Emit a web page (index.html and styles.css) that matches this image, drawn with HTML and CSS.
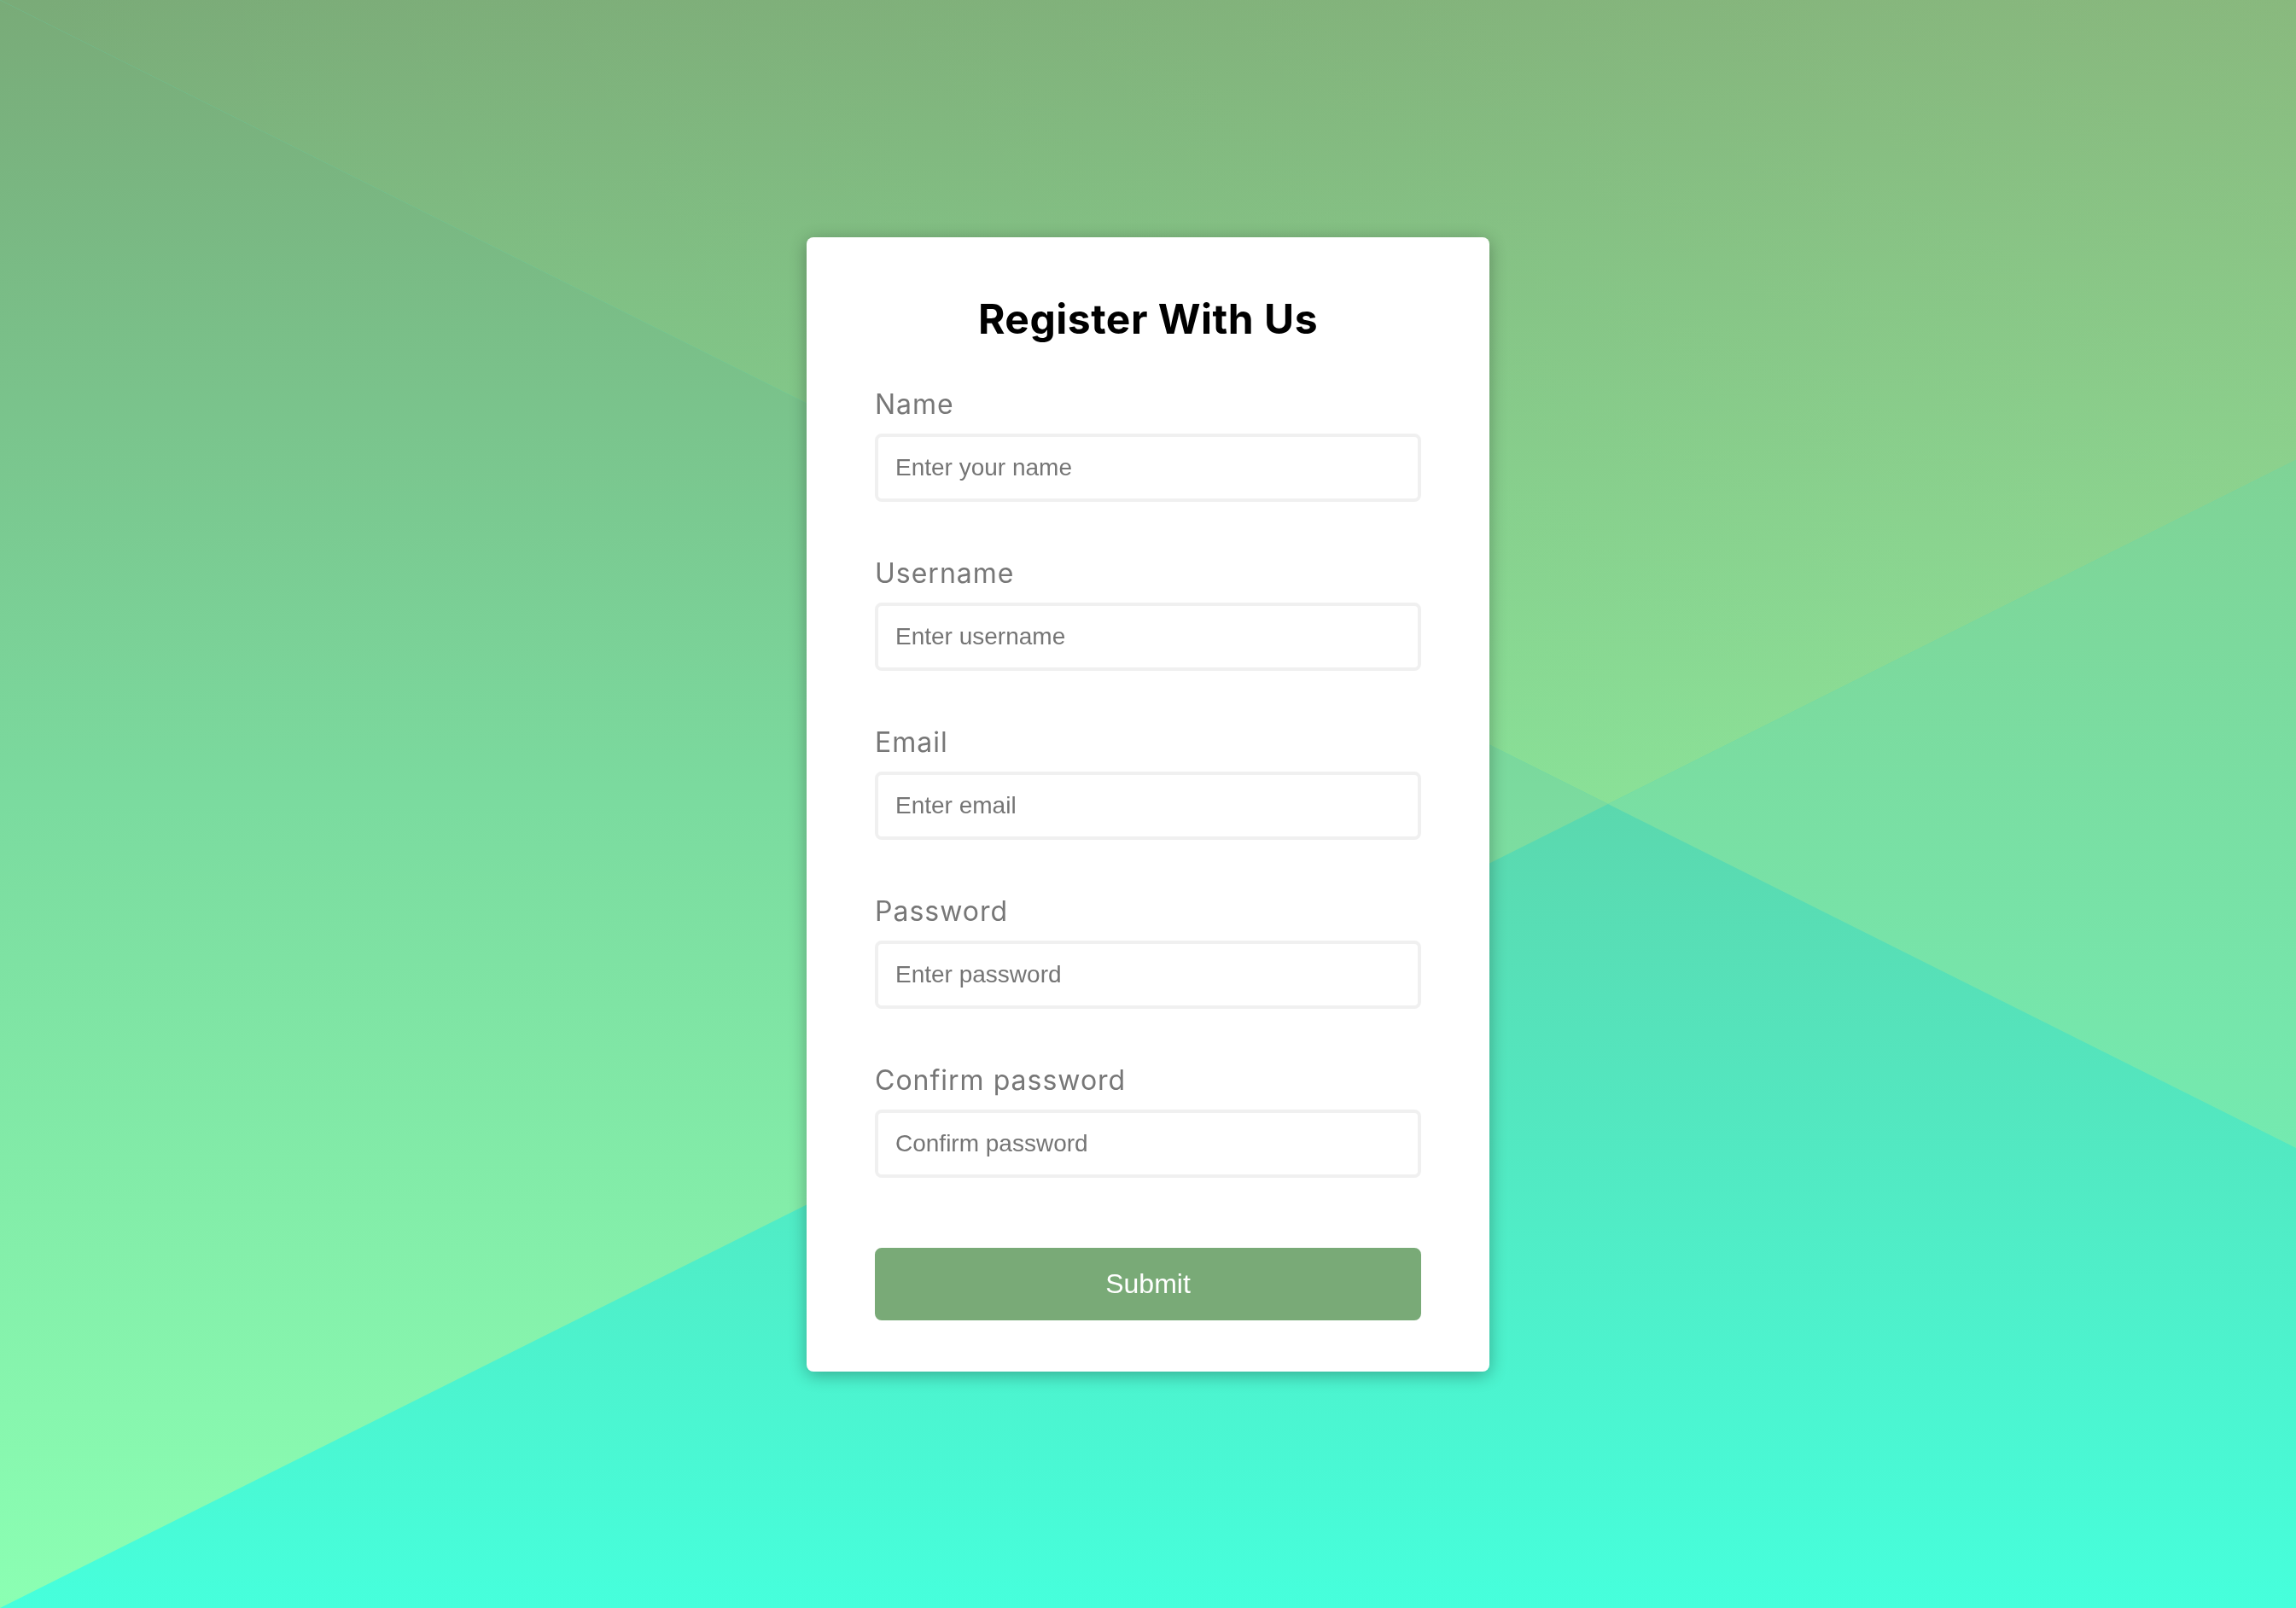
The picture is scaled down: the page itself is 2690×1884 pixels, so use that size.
FILE: index.html
```html
<!DOCTYPE html>
<html lang="en">
<head>
<meta charset="UTF-8">
<title>Register With Us</title>
<link rel="stylesheet" href="styles.css">
</head>
<body>
<svg class="backdrop" viewBox="0 0 2690 1884" preserveAspectRatio="none" aria-hidden="true">
  <defs>
    <linearGradient id="gTop" gradientUnits="userSpaceOnUse" x1="0" y1="0" x2="0" y2="942">
      <stop offset="0" stop-color="#7aab78"/>
      <stop offset="1" stop-color="#80dd97"/>
    </linearGradient>
    <linearGradient id="gTopSheen" gradientUnits="userSpaceOnUse" x1="0" y1="0" x2="2690" y2="0">
      <stop offset="0" stop-color="#d2fd9b" stop-opacity="0"/>
      <stop offset="1" stop-color="#d2fd9b" stop-opacity="0.17"/>
    </linearGradient>
    <linearGradient id="gLeft" gradientUnits="userSpaceOnUse" x1="0" y1="0" x2="0" y2="1884">
      <stop offset="0" stop-color="#79ab78"/>
      <stop offset="0.5" stop-color="#7bdb9f"/>
      <stop offset="1" stop-color="#8bffb3"/>
    </linearGradient>
    <linearGradient id="gRight" gradientUnits="userSpaceOnUse" x1="0" y1="539" x2="0" y2="1345">
      <stop offset="0" stop-color="#7fd396"/>
      <stop offset="1" stop-color="#74eab0"/>
    </linearGradient>
    <linearGradient id="gBottom" gradientUnits="userSpaceOnUse" x1="0" y1="942" x2="0" y2="1884">
      <stop offset="0" stop-color="#5bd8ae"/>
      <stop offset="1" stop-color="#46ffdc"/>
    </linearGradient>
  </defs>
  <rect x="0" y="0" width="2690" height="1884" fill="url(#gBottom)"/>
  <polygon points="0,0 2690,0 2690,539 1884,942" fill="url(#gTop)"/>
  <polygon points="0,0 2690,0 2690,539 1884,942" fill="url(#gTopSheen)"/>
  <polygon points="0,0 1884,942 0,1884" fill="url(#gLeft)"/>
  <polygon points="2690,539 2690,1345 1884,942" fill="url(#gRight)"/>
</svg>

<main class="card">
  <form class="form" action="#" onsubmit="return false;">
    <h2 class="card-title">Register With Us</h2>

    <div class="field">
      <label class="field-label" for="name">Name</label>
      <input class="field-input" type="text" id="name" placeholder="Enter your name">
    </div>

    <div class="field">
      <label class="field-label" for="username">Username</label>
      <input class="field-input" type="text" id="username" placeholder="Enter username">
    </div>

    <div class="field">
      <label class="field-label" for="email">Email</label>
      <input class="field-input" type="text" id="email" placeholder="Enter email">
    </div>

    <div class="field">
      <label class="field-label" for="password">Password</label>
      <input class="field-input" type="password" id="password" placeholder="Enter password">
    </div>

    <div class="field">
      <label class="field-label" for="password2">Confirm password</label>
      <input class="field-input" type="password" id="password2" placeholder="Confirm password">
    </div>

    <button class="submit" type="submit">Submit</button>
  </form>
</main>
</body>
</html>
```

FILE: styles.css
```css
* {
  box-sizing: border-box;
}

html,
body {
  margin: 0;
  padding: 0;
}

body {
  min-height: 100vh;
  display: flex;
  align-items: center;
  justify-content: center;
  background: #5fd5aa;
  font-family: "Liberation Sans", Arial, sans-serif;
}

.backdrop {
  position: fixed;
  top: 0;
  left: 0;
  width: 100%;
  height: 100%;
  z-index: 0;
  display: block;
}

.card {
  position: relative;
  z-index: 1;
  width: 800px;
  background: #ffffff;
  border-radius: 8px;
  box-shadow: 0 4px 20px rgba(0, 0, 0, 0.3);
}

.form {
  padding: 60px 80px;
}

.card-title {
  margin: 0 0 40px;
  text-align: center;
  font-family: Inter, "Open Sans", sans-serif;
  font-weight: 700;
  font-size: 48px;
  line-height: 72px;
  letter-spacing: 0.5px;
  color: #000000;
}

.field {
  margin-bottom: 20px;
  padding-bottom: 40px;
}

.field-label {
  display: block;
  margin-bottom: 10px;
  font-family: Inter, "Open Sans", sans-serif;
  font-size: 32px;
  line-height: 48px;
  letter-spacing: 1px;
  color: #777777;
}

.field-input {
  display: block;
  width: 100%;
  height: 80px;
  padding: 20px;
  border: 4px solid #f0f0f0;
  border-radius: 8px;
  background: #ffffff;
  font-family: "Liberation Sans", Arial, sans-serif;
  font-size: 28px;
  color: #333333;
  outline: none;
}

.field-input::placeholder {
  color: #757575;
  opacity: 1;
}

.submit {
  display: block;
  width: 100%;
  height: 85px;
  margin: 42px 0 0;
  padding: 20px;
  border: 4px solid #79aa77;
  border-radius: 8px;
  background: #79aa77;
  color: #ffffff;
  font-family: "Liberation Sans", Arial, sans-serif;
  font-size: 32px;
  line-height: 37px;
  cursor: pointer;
}
```
